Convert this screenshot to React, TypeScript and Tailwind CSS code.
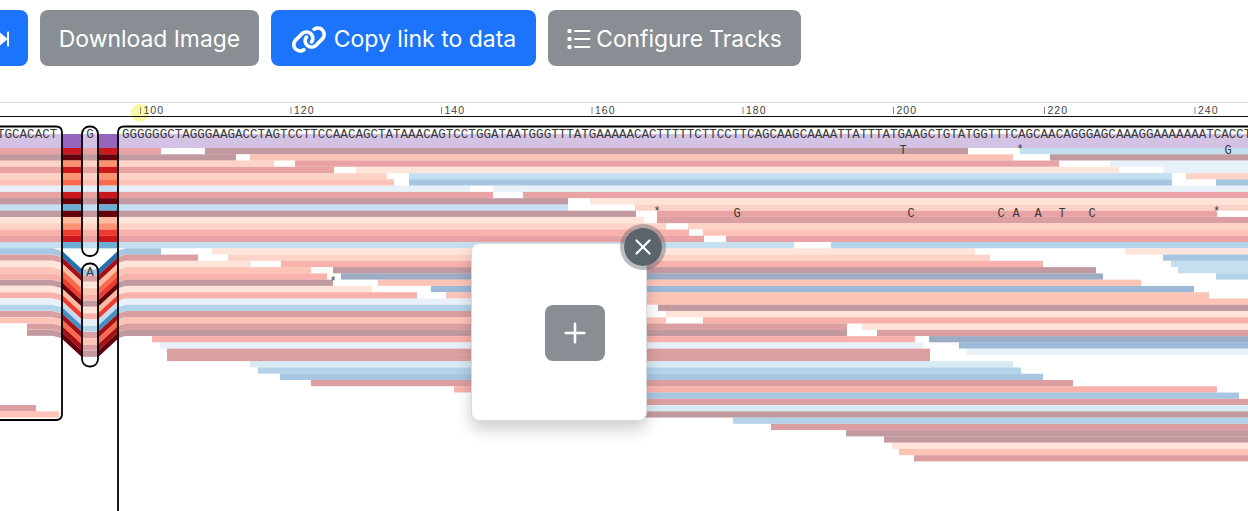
import { FaLink, FaForwardStep } from "react-icons/fa6";
import { Plus, X } from "lucide-react";

const C: Record<string, string> = {
  a: "#67000d", b: "#a50f15", c: "#cb181d", d: "#ef3b2c", e: "#fb6a4a", f: "#fc9272", g: "#fcbba1",
  h: "#08306b", i: "#08519c", j: "#2171b5", k: "#4292c6", l: "#6baed6", m: "#9ecae1", n: "#c6dbef",
};
const P = "#9467bd";
const STEP = 6.27;
const Y0 = 148;
const END = 1250;

// each row: left-block colour, then breakpoints "x key"; "-" is empty
const ROWS: [string, [number, string][]][] = [
  ["c", [[118, "c"], [161, "-"], [205, "a"], [968, "-"], [1020, "l"]]],
  ["a", [[118, "a"], [236, "-"], [250, "e"], [1013, "-"], [1050, "a"]]],
  ["f", [[118, "f"], [274, "-"], [295, "c"], [1059, "-"], [1110, "n"]]],
  ["c", [[118, "c"], [334, "-"], [356, "g"], [1119, "-"], [1163, "n"]]],
  ["f", [[118, "f"], [387, "-"], [409, "l"], [1172, "-"], [1186, "f"]]],
  ["e", [[118, "e"], [394, "-"], [409, "j"], [1172, "-"], [1216, "j"]]],
  ["n", [[118, "n"], [470, "-"], [493, "n"]]],
  ["c", [[118, "c"], [493, "-"], [523, "c"]]],
  ["a", [[118, "a"], [568, "-"], [590, "g"]]],
  ["l", [[118, "l"], [568, "-"], [635, "f"]]],
  ["a", [[118, "a"], [636, "-"], [657, "c"], [1217, "-"]]],
  ["g", [[118, "g"], [644, "-"], [657, "b"]]],
  ["f", [[118, "f"], [666, "-"], [688, "f"]]],
  ["d", [[118, "d"], [689, "-"], [703, "e"]]],
  ["c", [[118, "c"], [704, "-"], [726, "c"]]],
  ["l", [[118, "l"], [794, "-"], [831, "k"]]],
  ["j", [[118, "j"], [161, "-"], [212, "g"], [975, "-"], [1125, "g"]]],
  ["b", [[118, "b"], [198, "-"], [228, "f"], [990, "-"], [1163, "j"]]],
  ["g", [[118, "g"], [251, "-"], [281, "d"], [1043, "-"], [1171, "l"]]],
  ["e", [[118, "e"], [311, "-"], [333, "a"], [1096, "-"], [1178, "l"]]],
  ["d", [[118, "d"], [327, "-"], [341, "h"], [1103, "-"], [1216, "k"]]],
  ["a", [[118, "a"], [333, "-"], [378, "e"], [1141, "-"]]],
  ["g", [[118, "g"], [372, "-"], [431, "i"], [1194, "-"]]],
  ["d", [[118, "d"], [417, "-"], [446, "e"], [1209, "-"]]],
  ["n", [[118, "n"], [560, "e"]]],
  ["k", [[118, "k"], [640, "-"], [658, "a"]]],
  ["b", [[118, "b"], [640, "-"], [666, "g"]]],
  ["e", [[118, "e"], [666, "-"], [703, "d"]]],
  ["b", [[118, "b"], [847, "-"], [862, "g"]]],
  ["a", [[118, "a"], [847, "-"], [877, "b"]]],
  ["", [[152, "d"], [915, "-"], [929, "h"]]],
  ["", [[160, "n"], [923, "-"], [959, "i"]]],
  ["", [[167, "b"], [930, "-"], [967, "n"]]],
  ["", [[167, "b"], [930, "-"]]],
  ["", [[250, "m"], [1013, "-"]]],
  ["", [[258, "k"], [1021, "-"]]],
  ["", [[280, "j"], [1043, "-"]]],
  ["", [[311, "b"], [1073, "-"]]],
  ["", [[454, "d"], [1217, "-"]]],
  ["", [[480, "j"], [1239, "-"]]],
  ["", [[490, "b"]]],
  ["", [[510, "m"]]],
  ["", [[560, "a"]]],
  ["", [[733, "k"]]],
  ["", [[771, "b"]]],
  ["", [[846, "a"]]],
  ["", [[884, "a"]]],
  ["", [[892, "g"]]],
  ["", [[899, "e"]]],
  ["", [[914, "b"]]],
];

const TICKS: [number, string][] = [
  [140.5, "100"], [291, "120"], [441.5, "140"], [592, "160"], [743, "180"], [893.5, "200"], [1044.5, "220"], [1195, "240"],
];

const BASES: [number, number, string][] = [
  [903, 154, "T"], [1020, 153, "*"], [1228, 154, "G"], [657, 215, "*"], [737, 217, "G"], [911, 217, "C"],
  [1001, 217, "C"], [1016, 217, "A"], [1038, 217, "A"], [1062, 217, "T"], [1092, 217, "C"], [1216.5, 215, "*"], [333, 285, "*"],
];

const SEQ = "GGGGGGCTAGGGAAGACCTAGTCCTTCCAACAGCTATAAACAGTCCTGGATAATGGGTTTATGAAAAACACTTTTTCTTCCTTCAGCAAGCAAAATTATTTATGAAGCTGTATGGTTTCAGCAACAGGGAGCAAAGGAAAAAAATCACCT";

const BEND_FROM = 16;
const BEND_TO = 29;
const OFF_EDGE = 2.5;
const OFF_MID = 21;
const H = 6;

function rowY(i: number) {
  return Y0 + i * STEP;
}

function Pileup() {
  const bars: React.ReactNode[] = [];
  ROWS.forEach(([left, segs], i) => {
    const y = rowY(i);
    const bent = i >= BEND_FROM && i <= BEND_TO;
    // left block
    if (left) {
      const lx = i >= 28 ? 27 : -2;
      if (bent) {
        bars.push(<rect key={`l${i}`} x={lx} y={y} width={52 - lx} height={H} fill={C[left]} opacity={0.4} />);
        bars.push(
          <polygon key={`ls${i}`} points={`52,${y} 62,${y + OFF_EDGE} 62,${y + OFF_EDGE + H} 52,${y + H}`} fill={C[left]} opacity={0.4} />
        );
        bars.push(
          <polygon key={`g1${i}`} points={`62,${y + OFF_EDGE} 82,${y + OFF_MID} 82,${y + OFF_MID + H + 0.3} 62,${y + OFF_EDGE + H + 0.3}`} fill={C[left]} />
        );
        bars.push(<rect key={`p${i}`} x={82} y={y + OFF_MID} width={16} height={H} fill={C[left]} opacity={0.4} />);
        bars.push(
          <polygon key={`g2${i}`} points={`98,${y + OFF_MID} 118,${y + OFF_EDGE} 118,${y + OFF_EDGE + H + 0.3} 98,${y + OFF_MID + H + 0.3}`} fill={C[left]} />
        );
        bars.push(
          <polygon key={`rs${i}`} points={`118,${y + OFF_EDGE} 126,${y} 126,${y + H} 118,${y + OFF_EDGE + H}`} fill={C[left]} opacity={0.4} />
        );
      } else {
        bars.push(<rect key={`l${i}`} x={-2} y={y} width={64} height={H + 0.3} fill={C[left]} opacity={0.4} />);
        bars.push(<rect key={`g1${i}`} x={62} y={y} width={20} height={H + 0.3} fill={C[left]} />);
        bars.push(<rect key={`p${i}`} x={82} y={y} width={16} height={H + 0.3} fill={C[left]} opacity={0.4} />);
        bars.push(<rect key={`g2${i}`} x={98} y={y} width={20} height={H + 0.3} fill={C[left]} />);
      }
    }
    segs.forEach(([x, k], j) => {
      if (k === "-") return;
      const next = j + 1 < segs.length ? segs[j + 1][0] : END;
      const start = bent && x === 118 ? 126 : x;
      bars.push(<rect key={`r${i}-${j}`} x={start} y={y} width={next - start} height={H + 0.2} fill={C[k]} opacity={0.4} />);
    });
  });

  const mono = "fill-[#3a3a3a] font-['Liberation_Mono',monospace] text-[12.55px]";

  return (
    <svg className="mt-[34px] block" width={1248} height={411} viewBox="0 100 1248 411">
      <line x1={0} x2={1248} y1={102.5} y2={102.5} stroke="#dddddd" strokeWidth={1} />
      <circle cx={140} cy={113} r={9} fill="#f7f78f" opacity={0.85} />
      <line x1={0} x2={1248} y1={116.5} y2={116.5} stroke="#111111" strokeWidth={1} />
      {TICKS.map(([x, t]) => (
        <g key={t}>
          <line x1={x} x2={x} y1={107} y2={114} stroke="#888888" strokeWidth={1} />
          <text x={x + 3} y={114} className="fill-[#444444] font-['Liberation_Sans',sans-serif] text-[10.5px] tracking-[1px]">
            {t}
          </text>
        </g>
      ))}

      {/* reference bar */}
      <rect x={-2} y={134} width={64} height={14} fill={P} opacity={0.4} />
      <rect x={62} y={134} width={20} height={14} fill={P} />
      <rect x={82} y={134} width={16} height={14} fill={P} opacity={0.4} />
      <rect x={98} y={134} width={20} height={14} fill={P} />
      <rect x={118} y={134} width={1132} height={14} fill={P} opacity={0.4} />

      {bars}

      {/* ends of the reads in the left block */}
      <rect x={-2} y={405} width={38} height={6.2} fill={C.b} opacity={0.4} />
      <rect x={-2} y={411.3} width={61} height={6.2} fill={C.e} opacity={0.4} />

      <text x={-3} y={138} className={mono}>TGCACACT</text>
      <text x={90} y={138} textAnchor="middle" className={mono}>G</text>
      <text x={122} y={138} className={mono}>{SEQ}</text>
      <text x={90} y={276} textAnchor="middle" className={mono}>A</text>

      {BASES.map(([x, y, t], i) => (
        <text key={i} x={x} y={y} textAnchor="middle" className="fill-[#3a3a3a] font-['Liberation_Mono',monospace] text-[12px]">
          {t}
        </text>
      ))}

      <g fill="none" stroke="#000000" strokeWidth={1.8}>
        <path d="M -10 126.5 H 56 Q 62 126.5 62 132.5 V 414 Q 62 420 56 420 H -10" />
        <rect x={82} y={126.5} width={16} height={129.5} rx={7.5} />
        <rect x={82} y={263.5} width={16} height={103} rx={7.5} />
        <path d="M 1260 126.5 H 124 Q 118 126.5 118 132.5 V 520" />
      </g>
    </svg>
  );
}

function ListIcon() {
  return (
    <svg width={24} height={22} viewBox="0 0 24 22" fill="currentColor" className="mr-[5px]">
      <rect x={0.5} y={1} width={4} height={4} rx={1} />
      <rect x={0.5} y={9} width={4} height={4} rx={1} />
      <rect x={0.5} y={17} width={4} height={4} rx={1} />
      <rect x={7} y={2} width={16.5} height={2} rx={1} />
      <rect x={7} y={10} width={16.5} height={2} rx={1} />
      <rect x={7} y={18} width={16.5} height={2} rx={1} />
    </svg>
  );
}

export default function App() {
  return (
    <div className="relative h-[511px] w-[1248px] overflow-hidden bg-white font-['Inter',sans-serif]">
      <div className="flex gap-3 pt-[10px] -ml-[20px]">
        <button className="flex h-14 w-[48px] items-center justify-end rounded-lg bg-[#1b74fb] pr-[19px] pt-[2px] text-white">
          <FaForwardStep className="h-[20px] w-[12.5px] shrink-0" />
        </button>
        <button className="flex h-14 w-[219px] items-center justify-center rounded-lg bg-[#888e94] pt-[2px] text-[22.9px] text-white">
          Download Image
        </button>
        <button className="flex h-14 w-[265px] items-center justify-center gap-[7px] rounded-lg bg-[#1b74fb] pt-[2px] text-[23px] text-white">
          <FaLink className="h-[29px] w-[36px]" />
          Copy link to data
        </button>
        <button className="flex h-14 w-[253px] items-center justify-center rounded-lg bg-[#888e94] pt-[2px] text-[22.8px] text-white">
          <ListIcon />
          Configure Tracks
        </button>
      </div>

      <Pileup />

      <div className="absolute left-[471px] top-[243px] flex h-[178px] w-[176px] items-center justify-center rounded-lg border border-[#d8dadc] bg-white pl-8 pt-[2px] shadow-[0_8px_16px_rgba(0,0,0,0.2)]">
        <button className="flex h-14 w-[60px] items-center justify-center rounded-lg bg-[#888e94] text-white">
          <Plus className="h-8 w-8" strokeWidth={1.9} />
        </button>
      </div>
      <button className="absolute left-[620px] top-[224px] flex h-[46px] w-[46px] items-center justify-center rounded-full border-4 border-[rgba(91,99,107,0.42)] bg-[#5b636b] bg-clip-padding text-white">
        <X className="h-[26px] w-[26px]" strokeWidth={2} />
      </button>
    </div>
  );
}
